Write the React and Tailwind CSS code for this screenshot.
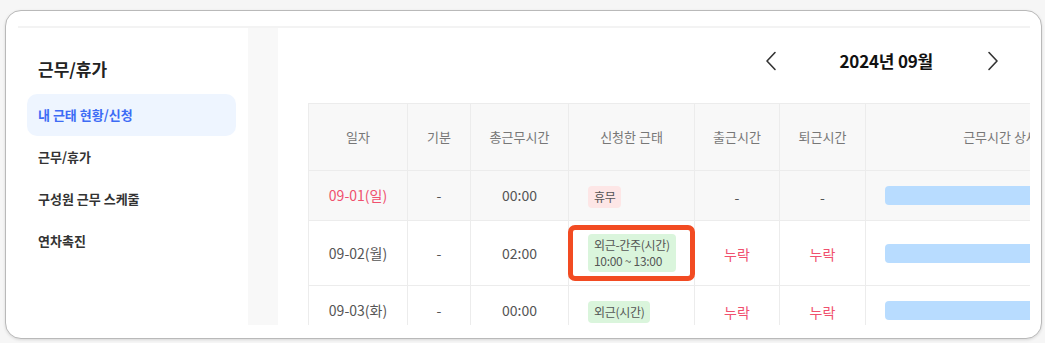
import { useState } from 'react'

const font = { fontFamily: '"Noto Sans CJK KR", "Noto Sans", sans-serif' }

const menu = ['내 근태 현황/신청', '근무/휴가', '구성원 근무 스케줄', '연차촉진']

const columns = [
  { label: '일자', w: 'w-[99px]' },
  { label: '기분', w: 'w-[63px]' },
  { label: '총근무시간', w: 'w-[98px]' },
  { label: '신청한 근태', w: 'w-[126px]' },
  { label: '출근시간', w: 'w-[85px]' },
  { label: '퇴근시간', w: 'w-[86px]' },
  { label: '근무시간 상세', w: 'w-[270px]' },
]

const rows = [
  { date: '09-01(일)', kind: '-', total: '00:00', badge: ['휴무'], tone: 'red', inTime: '-', outTime: '-', holiday: true, h: 'h-[50px]' },
  { date: '09-02(월)', kind: '-', total: '02:00', badge: ['외근-간주(시간)', '10:00 ~ 13:00'], tone: 'green', inTime: '누락', outTime: '누락', marked: true, h: 'h-[65px]' },
  { date: '09-03(화)', kind: '-', total: '00:00', badge: ['외근(시간)'], tone: 'green', inTime: '누락', outTime: '누락', h: 'h-[50px]' },
]

function Chevron({ dir }) {
  return (
    <svg width="12" height="20" viewBox="0 0 12 20" fill="none" stroke="#333" strokeWidth="1.6" strokeLinecap="round" strokeLinejoin="round">
      {dir === 'left' ? <polyline points="10,1.5 2,10 10,18.5" /> : <polyline points="2,1.5 10,10 2,18.5" />}
    </svg>
  )
}

function TimeCell({ value }) {
  if (value === '누락') return <span className="text-[14px] text-[#f0506e]">누락</span>
  return <span className="text-[14px] text-[#555]">{value}</span>
}

export default function App() {
  const [active] = useState(0)

  return (
    <div className="w-[1045px] h-[343px] bg-[#f6f6f6] pt-[10px] pl-[5px]" style={font}>
      <div className="w-[1037px] h-[329px] rounded-[16px] border border-[#b9b9b9] bg-white shadow-[0_1px_3px_rgba(0,0,0,0.12)] pt-[15px] pl-[12px]">
        <div className="w-[1012px] h-[299px] overflow-hidden border-t-2 border-[#f3f3f3] flex">
          {/* Sidebar */}
          <div className="w-[230px] shrink-0 pl-[9px] pr-[12px] pt-[29px]">
            <div className="pl-[11px] h-[24px] leading-[24px] text-[17px] font-bold text-[#222]">근무/휴가</div>
            <div className="mt-[13px] flex flex-col">
              {menu.map((m, i) => (
                <div
                  key={m}
                  className={
                    i === active
                      ? 'h-[42px] flex items-center px-[11px] rounded-[10px] bg-[#eef5ff] text-[13px] font-bold text-[#3d6cf5]'
                      : 'h-[42px] flex items-center px-[11px] text-[13px] font-bold text-[#333]'
                  }
                >
                  {m}
                </div>
              ))}
            </div>
          </div>

          {/* Gray gutter */}
          <div className="w-[30px] shrink-0 bg-[#f8f8f8]" />

          {/* Content */}
          <div className="flex-1 pl-[30px] pt-[13px] overflow-hidden">
            <div className="h-[40px] flex items-center justify-end pr-[25px]">
              <div className="w-[24px] h-[24px] mr-[56px] flex items-center justify-center"><Chevron dir="left" /></div>
              <div className="text-[17px] font-bold text-[#111] tracking-[-0.2px]">2024년 09월</div>
              <div className="w-[24px] h-[24px] ml-[48px] flex items-center justify-center"><Chevron dir="right" /></div>
            </div>

            <table className="mt-[22px] border-collapse table-fixed w-[827px]">
              <thead>
                <tr className="h-[67px] bg-[#f8f8f8]">
                  {columns.map((c) => (
                    <th key={c.label} className={`${c.w} border border-[#ececec] text-[13px] font-normal text-[#777]`}>
                      {c.label}
                    </th>
                  ))}
                </tr>
              </thead>
              <tbody>
                {rows.map((r) => (
                  <tr key={r.date} className={`${r.h} ${r.holiday ? 'bg-[#f8f8f8]' : 'bg-white'}`}>
                    <td className={`border border-[#ececec] text-center text-[14px] ${r.holiday ? 'text-[#f0506e]' : 'text-[#555]'}`}>{r.date}</td>
                    <td className="border border-[#ececec] text-center text-[14px] text-[#555]">{r.kind}</td>
                    <td className="border border-[#ececec] text-center text-[14px] text-[#555]">{r.total}</td>
                    <td className="relative border border-[#ececec] pl-[19px]">
                      <span
                        className={`inline-block rounded-[4px] px-[6px] py-[3px] text-[12px] leading-[16px] tracking-[-0.3px] text-[#555] ${
                          r.tone === 'red' ? 'bg-[#fde6e6]' : 'bg-[#daf5dc]'
                        }`}
                      >
                        {r.badge.map((b) => (
                          <div key={b}>{b}</div>
                        ))}
                      </span>
                      {r.marked && (
                        <div className="absolute left-[-1px] top-[4px] w-[127px] h-[56px] rounded-[7px] border-[5px] border-[#f24b22]" />
                      )}
                    </td>
                    <td className="border border-[#ececec] text-center"><TimeCell value={r.inTime} /></td>
                    <td className="border border-[#ececec] text-center"><TimeCell value={r.outTime} /></td>
                    <td className="border border-[#ececec] pl-[19px]">
                      <div className="h-[19px] w-[230px] rounded-[4px] bg-[#b8dcff]" />
                    </td>
                  </tr>
                ))}
              </tbody>
            </table>
          </div>
        </div>
      </div>
    </div>
  )
}
